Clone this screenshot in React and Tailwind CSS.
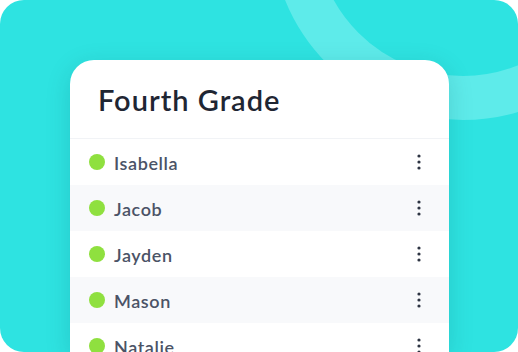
const students = ['Isabella', 'Jacob', 'Jayden', 'Mason', 'Natalie'];

// vertical three-dot menu
const Kebab = () => (
  <svg width="6" height="18" viewBox="0 0 6 18" className="text-[#2d3442]">
    <circle cx="3" cy="3" r="1.6" fill="currentColor" />
    <circle cx="3" cy="9" r="1.6" fill="currentColor" />
    <circle cx="3" cy="15" r="1.6" fill="currentColor" />
  </svg>
);

const StudentRow = ({ name, striped }) => (
  <div
    className={
      'flex h-[46px] shrink-0 items-center pl-[19px] pr-[27px] ' +
      (striped ? 'bg-[#f8f9fb]' : 'bg-white')
    }
  >
    <span className="h-4 w-4 shrink-0 rounded-full bg-[#8fe03f]" />
    <span className="ml-[9px] flex-1 pt-[2px] text-[18px] font-semibold tracking-[0.6px] text-[#4b5366]">
      {name}
    </span>
    <Kebab />
  </div>
);

export default function App() {
  return (
    <div
      className="relative h-[352px] w-[518px] overflow-hidden rounded-3xl bg-[#2ee3e1] pl-[70px] pr-[69px] pt-[60px]"
      style={{ fontFamily: 'Lato, "Open Sans", sans-serif' }}
    >
      {/* background ring */}
      <svg className="absolute left-0 top-0" width="518" height="352" viewBox="0 0 518 352">
        <circle cx="463" cy="-72" r="170" fill="none" stroke="#5eebea" strokeWidth="44" />
      </svg>

      <div className="relative flex h-full flex-col overflow-hidden rounded-t-3xl bg-white shadow-[0_6px_24px_rgba(0,80,90,0.18)]">
        <div className="flex h-[79px] shrink-0 items-center border-b border-[#f1f3f6] px-[28px] pt-[2px]">
          <h1 className="text-[29px] font-semibold tracking-[1px] text-[#1f2633]">Fourth Grade</h1>
        </div>
        {students.map((n, i) => (
          <StudentRow key={n} name={n} striped={i % 2 === 1} />
        ))}
      </div>
    </div>
  );
}
